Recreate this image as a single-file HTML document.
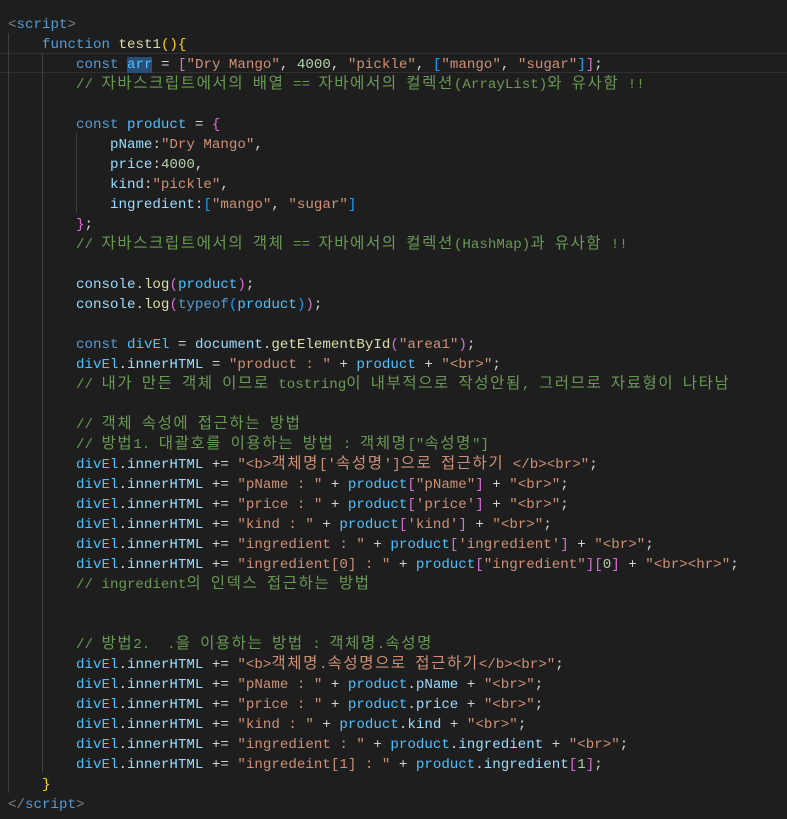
<!DOCTYPE html>
<html><head><meta charset="utf-8"><style>
body{margin:0;background:#1e1e1e;width:787px;height:819px;overflow:hidden;position:relative}
pre{margin:0;position:absolute;left:8px;top:15px;font-family:"Liberation Mono","Noto Sans CJK KR",monospace;font-size:14.17px;line-height:20px;color:#d4d4d4}
.k{font-family:"Noto Sans CJK KR",sans-serif;font-size:15.5px;letter-spacing:1.6px;line-height:0}
.kw{color:#569cd6}.fn{color:#dcdcaa}.v{color:#9cdcfe}.c{color:#4fc1ff}.s{color:#ce9178}.n{color:#b5cea8}.cm{color:#6a9955}
.y{color:#ffd700}.p{color:#da70d6}.b{color:#179fff}.g{color:#808080}
.sel{background:#264f78}
.g1{position:absolute;width:1px;background:#404040}
.hl{position:absolute;left:0;width:787px;top:53px;height:18px;border-top:1px solid #303030;border-bottom:1px solid #303030}
</style></head><body>
<div class="hl"></div>
<div class="g1" style="left:8px;top:33px;height:760px"></div>
<div class="g1" style="left:42px;top:53px;height:720px"></div>
<div class="g1" style="left:76px;top:133px;height:80px"></div>
<pre><span class="g">&lt;</span><span class="kw">script</span><span class="g">&gt;</span>
    <span class="kw">function</span> <span class="fn">test1</span><span class="y">(){</span>
        <span class="kw">const</span> <span class="c sel">arr</span> = <span class="p">[</span><span class="s">"Dry Mango"</span>, <span class="n">4000</span>, <span class="s">"pickle"</span>, <span class="b">[</span><span class="s">"mango"</span>, <span class="s">"sugar"</span><span class="b">]</span><span class="p">]</span>;
        <span class="cm">// <span class="k">자바스크립트에서의</span> <span class="k">배열</span> == <span class="k">자바에서의</span> <span class="k">컬렉션</span>(ArrayList)<span class="k">와</span> <span class="k">유사함</span> !!</span>

        <span class="kw">const</span> <span class="c">product</span> = <span class="p">{</span>
            <span class="v">pName</span>:<span class="s">"Dry Mango"</span>,
            <span class="v">price</span>:<span class="n">4000</span>,
            <span class="v">kind</span>:<span class="s">"pickle"</span>,
            <span class="v">ingredient</span>:<span class="b">[</span><span class="s">"mango"</span>, <span class="s">"sugar"</span><span class="b">]</span>
        <span class="p">}</span>;
        <span class="cm">// <span class="k">자바스크립트에서의</span> <span class="k">객체</span> == <span class="k">자바에서의</span> <span class="k">컬렉션</span>(HashMap)<span class="k">과</span> <span class="k">유사함</span> !!</span>

        <span class="v">console</span>.<span class="fn">log</span><span class="p">(</span><span class="c">product</span><span class="p">)</span>;
        <span class="v">console</span>.<span class="fn">log</span><span class="p">(</span><span class="kw">typeof</span><span class="b">(</span><span class="c">product</span><span class="b">)</span><span class="p">)</span>;

        <span class="kw">const</span> <span class="c">divEl</span> = <span class="v">document</span>.<span class="fn">getElementById</span><span class="p">(</span><span class="s">"area1"</span><span class="p">)</span>;
        <span class="c">divEl</span>.<span class="v">innerHTML</span> = <span class="s">"product : "</span> + <span class="c">product</span> + <span class="s">"&lt;br&gt;"</span>;
        <span class="cm">// <span class="k">내가</span> <span class="k">만든</span> <span class="k">객체</span> <span class="k">이므로</span> tostring<span class="k">이</span> <span class="k">내부적으로</span> <span class="k">작성안됨</span>, <span class="k">그러므로</span> <span class="k">자료형이</span> <span class="k">나타남</span></span>

        <span class="cm">// <span class="k">객체</span> <span class="k">속성에</span> <span class="k">접근하는</span> <span class="k">방법</span></span>
        <span class="cm">// <span class="k">방법</span>1. <span class="k">대괄호를</span> <span class="k">이용하는</span> <span class="k">방법</span> : <span class="k">객체명</span>["<span class="k">속성명</span>"]</span>
        <span class="c">divEl</span>.<span class="v">innerHTML</span> += <span class="s">"&lt;b&gt;<span class="k">객체명</span>['<span class="k">속성명</span>']<span class="k">으로</span> <span class="k">접근하기</span> &lt;/b&gt;&lt;br&gt;"</span>;
        <span class="c">divEl</span>.<span class="v">innerHTML</span> += <span class="s">"pName : "</span> + <span class="c">product</span><span class="p">[</span><span class="s">"pName"</span><span class="p">]</span> + <span class="s">"&lt;br&gt;"</span>;
        <span class="c">divEl</span>.<span class="v">innerHTML</span> += <span class="s">"price : "</span> + <span class="c">product</span><span class="p">[</span><span class="s">'price'</span><span class="p">]</span> + <span class="s">"&lt;br&gt;"</span>;
        <span class="c">divEl</span>.<span class="v">innerHTML</span> += <span class="s">"kind : "</span> + <span class="c">product</span><span class="p">[</span><span class="s">'kind'</span><span class="p">]</span> + <span class="s">"&lt;br&gt;"</span>;
        <span class="c">divEl</span>.<span class="v">innerHTML</span> += <span class="s">"ingredient : "</span> + <span class="c">product</span><span class="p">[</span><span class="s">'ingredient'</span><span class="p">]</span> + <span class="s">"&lt;br&gt;"</span>;
        <span class="c">divEl</span>.<span class="v">innerHTML</span> += <span class="s">"ingredient[0] : "</span> + <span class="c">product</span><span class="p">[</span><span class="s">"ingredient"</span><span class="p">][</span><span class="n">0</span><span class="p">]</span> + <span class="s">"&lt;br&gt;&lt;hr&gt;"</span>;
        <span class="cm">// ingredient<span class="k">의</span> <span class="k">인덱스</span> <span class="k">접근하는</span> <span class="k">방법</span></span>


        <span class="cm">// <span class="k">방법</span>2.  .<span class="k">을</span> <span class="k">이용하는</span> <span class="k">방법</span> : <span class="k">객체명</span>.<span class="k">속성명</span></span>
        <span class="c">divEl</span>.<span class="v">innerHTML</span> += <span class="s">"&lt;b&gt;<span class="k">객체명</span>.<span class="k">속성명으로</span> <span class="k">접근하기</span>&lt;/b&gt;&lt;br&gt;"</span>;
        <span class="c">divEl</span>.<span class="v">innerHTML</span> += <span class="s">"pName : "</span> + <span class="c">product</span>.<span class="v">pName</span> + <span class="s">"&lt;br&gt;"</span>;
        <span class="c">divEl</span>.<span class="v">innerHTML</span> += <span class="s">"price : "</span> + <span class="c">product</span>.<span class="v">price</span> + <span class="s">"&lt;br&gt;"</span>;
        <span class="c">divEl</span>.<span class="v">innerHTML</span> += <span class="s">"kind : "</span> + <span class="c">product</span>.<span class="v">kind</span> + <span class="s">"&lt;br&gt;"</span>;
        <span class="c">divEl</span>.<span class="v">innerHTML</span> += <span class="s">"ingredient : "</span> + <span class="c">product</span>.<span class="v">ingredient</span> + <span class="s">"&lt;br&gt;"</span>;
        <span class="c">divEl</span>.<span class="v">innerHTML</span> += <span class="s">"ingredeint[1] : "</span> + <span class="c">product</span>.<span class="v">ingredient</span><span class="p">[</span><span class="n">1</span><span class="p">]</span>;
    <span class="y">}</span>
<span class="g">&lt;/</span><span class="kw">script</span><span class="g">&gt;</span></pre>
</body></html>
